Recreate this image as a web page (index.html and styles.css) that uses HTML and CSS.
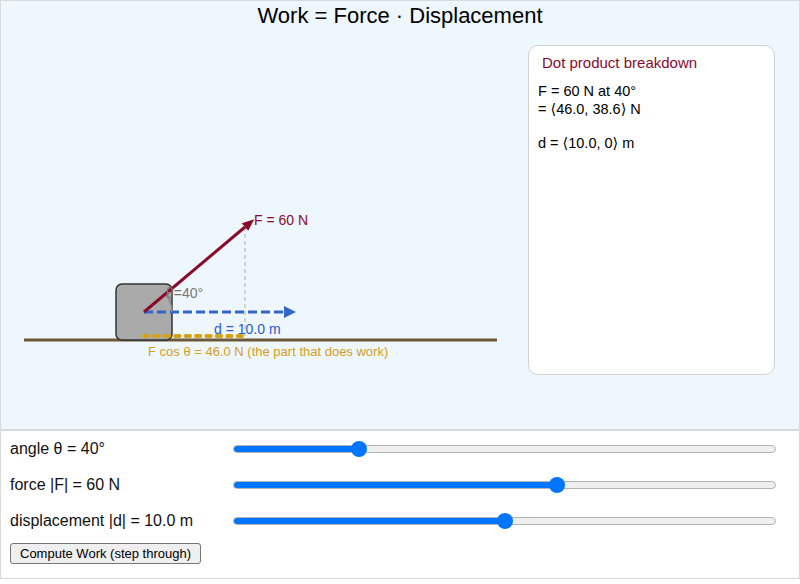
FILE: index.html
```html
<!DOCTYPE html>
<html lang="en">
<head>
<meta charset="utf-8">
<title>Work = Force · Displacement</title>
<link rel="stylesheet" href="styles.css">
</head>
<body>
<section class="stage">
  <h1 class="stage-title">Work = Force · Displacement</h1>
  <div class="stage-body">
    <svg class="diagram" width="527" height="400" viewBox="1 29 527 400" xmlns="http://www.w3.org/2000/svg">
      <!-- ground -->
      <line x1="24" y1="340" x2="497" y2="340" class="ground"/>
      <!-- block -->
      <rect x="116" y="284" width="56" height="56" rx="6" ry="6" class="block"/>
      <!-- projection of F onto d -->
      <line x1="245" y1="227" x2="245" y2="336" class="proj"/>
      <line x1="144" y1="336" x2="245" y2="336" class="fcos"/>
      <!-- displacement -->
      <line x1="144" y1="312" x2="284" y2="312" class="disp"/>
      <polygon points="284,306 296,312 284,318" class="disp-head"/>
      <!-- angle arc -->
      <path d="M172 312 A28 28 0 0 0 165.4 294" class="arc"/>
      <!-- force -->
      <line x1="144" y1="312" x2="245" y2="227" class="force"/>
      <polygon points="254.2,219.3 248.2,230.8 241.8,223.2" class="force-head"/>
      <!-- labels -->
      <text x="254" y="225" class="lbl lbl-force">F = 60 N</text>
      <text x="166" y="298" class="lbl lbl-angle">θ=40°</text>
      <text x="214" y="334" class="lbl lbl-disp">d = 10.0 m</text>
      <text x="148" y="356" class="lbl lbl-fcos">F cos θ = 46.0 N (the part that does work)</text>
    </svg>
    <aside class="card">
      <h2 class="card-title">Dot product breakdown</h2>
      <div class="card-body">
        <div>F = 60 N at 40°</div>
        <div>= ⟨46.0, 38.6⟩ N</div>
        <div class="gap">d = ⟨10.0, 0⟩ m</div>
      </div>
    </aside>
  </div>
</section>
<section class="controls">
  <div class="row">
    <label for="angle">angle θ = 40°</label>
    <input id="angle" type="range" min="0" max="180" value="40" style="--p:.2222">
  </div>
  <div class="row">
    <label for="force">force |F| = 60 N</label>
    <input id="force" type="range" min="0" max="100" value="60" style="--p:.6">
  </div>
  <div class="row">
    <label for="disp">displacement |d| = 10.0 m</label>
    <input id="disp" type="range" min="0" max="20" step="0.5" value="10" style="--p:.5">
  </div>
  <button type="button" class="step-btn">Compute Work (step through)</button>
</section>
</body>
</html>
```
FILE: styles.css
```css
body {
  margin: 0;
  width: 800px;
  font-family: "Liberation Sans", Arial, "DejaVu Sans", sans-serif;
  color: #000;
  background: #fff;
}

/* drawing area */
.stage {
  box-sizing: border-box;
  height: 430px;
  border: 1px solid #dadada;
  background: #eef6fe;
}

.stage-title {
  margin: 0;
  padding-top: 2px;
  font-size: 22px;
  font-weight: normal;
  line-height: 26px;
  text-align: center;
}

.stage-body {
  display: flex;
  align-items: flex-start;
}

.diagram {
  display: block;
  flex: none;
  font-family: "Liberation Sans", Arial, "DejaVu Sans", sans-serif;
}

.ground { stroke: #6d5837; stroke-width: 3; }
.block { fill: #aaaaaa; stroke: #333; stroke-width: 1.5; }
.proj { stroke: #bbbbbb; stroke-width: 1.2; stroke-dasharray: 4 3; }
.fcos { stroke: #d4a31a; stroke-width: 4; stroke-dasharray: 4.4 6; stroke-linecap: round; }
.disp { stroke: #3366cc; stroke-width: 3; stroke-dasharray: 9 4; }
.disp-head { fill: #3366cc; }
.arc { fill: none; stroke: #888; stroke-width: 1.5; }
.force { stroke: #8b0a2c; stroke-width: 3; }
.force-head { fill: #8b0a2c; }

.lbl { font-size: 14px; }
.lbl-force { fill: #8b0a2c; }
.lbl-angle { fill: #777; }
.lbl-disp { fill: #2a5bd0; }
.lbl-fcos { fill: #d4a017; font-size: 13px; }

/* breakdown card */
.card {
  box-sizing: border-box;
  flex: none;
  width: 247px;
  height: 330px;
  margin-top: 16px;
  padding: 8px 13px;
  background: #fff;
  border: 1px solid #d2d2d2;
  border-radius: 10px;
}

.card-title {
  margin: 0;
  font-size: 15px;
  font-weight: normal;
  line-height: 18px;
  color: #8b0a2c;
}

.card-body {
  margin: 10px 0 0 -4px;
  font-size: 14.5px;
  line-height: 18px;
}

.card-body .gap { margin-top: 16px; }

/* control panel */
.controls {
  box-sizing: border-box;
  border: 1px solid #dadada;
  padding: 0 23px 14px 9px;
  background: #fff;
}

.row {
  display: grid;
  grid-template-columns: 223px 1fr;
  align-items: center;
  height: 36px;
}

.row label {
  font-size: 16px;
  color: #111;
}

.row input[type=range] {
  -webkit-appearance: none;
  appearance: none;
  display: block;
  width: 100%;
  height: 16px;
  margin: 0;
  background: transparent;
}

.row input[type=range]::-webkit-slider-runnable-track {
  box-sizing: border-box;
  height: 8px;
  border: 1px solid #b4b4b4;
  border-radius: 4px;
  background: linear-gradient(to right,
    #0075ff calc(8px + var(--p) * (100% - 16px)),
    #efefef calc(8px + var(--p) * (100% - 16px)));
}

.row input[type=range]::-webkit-slider-thumb {
  -webkit-appearance: none;
  appearance: none;
  width: 16px;
  height: 16px;
  margin-top: -5px;
  border: none;
  border-radius: 50%;
  background: #0075ff;
}

.step-btn {
  display: block;
  margin-top: 4px;
  padding: 2px 9px;
  font-family: inherit;
  font-size: 13px;
  line-height: 15px;
  color: #000;
  background: #efefef;
  border: 1px solid #767676;
  border-radius: 3px;
}
```
